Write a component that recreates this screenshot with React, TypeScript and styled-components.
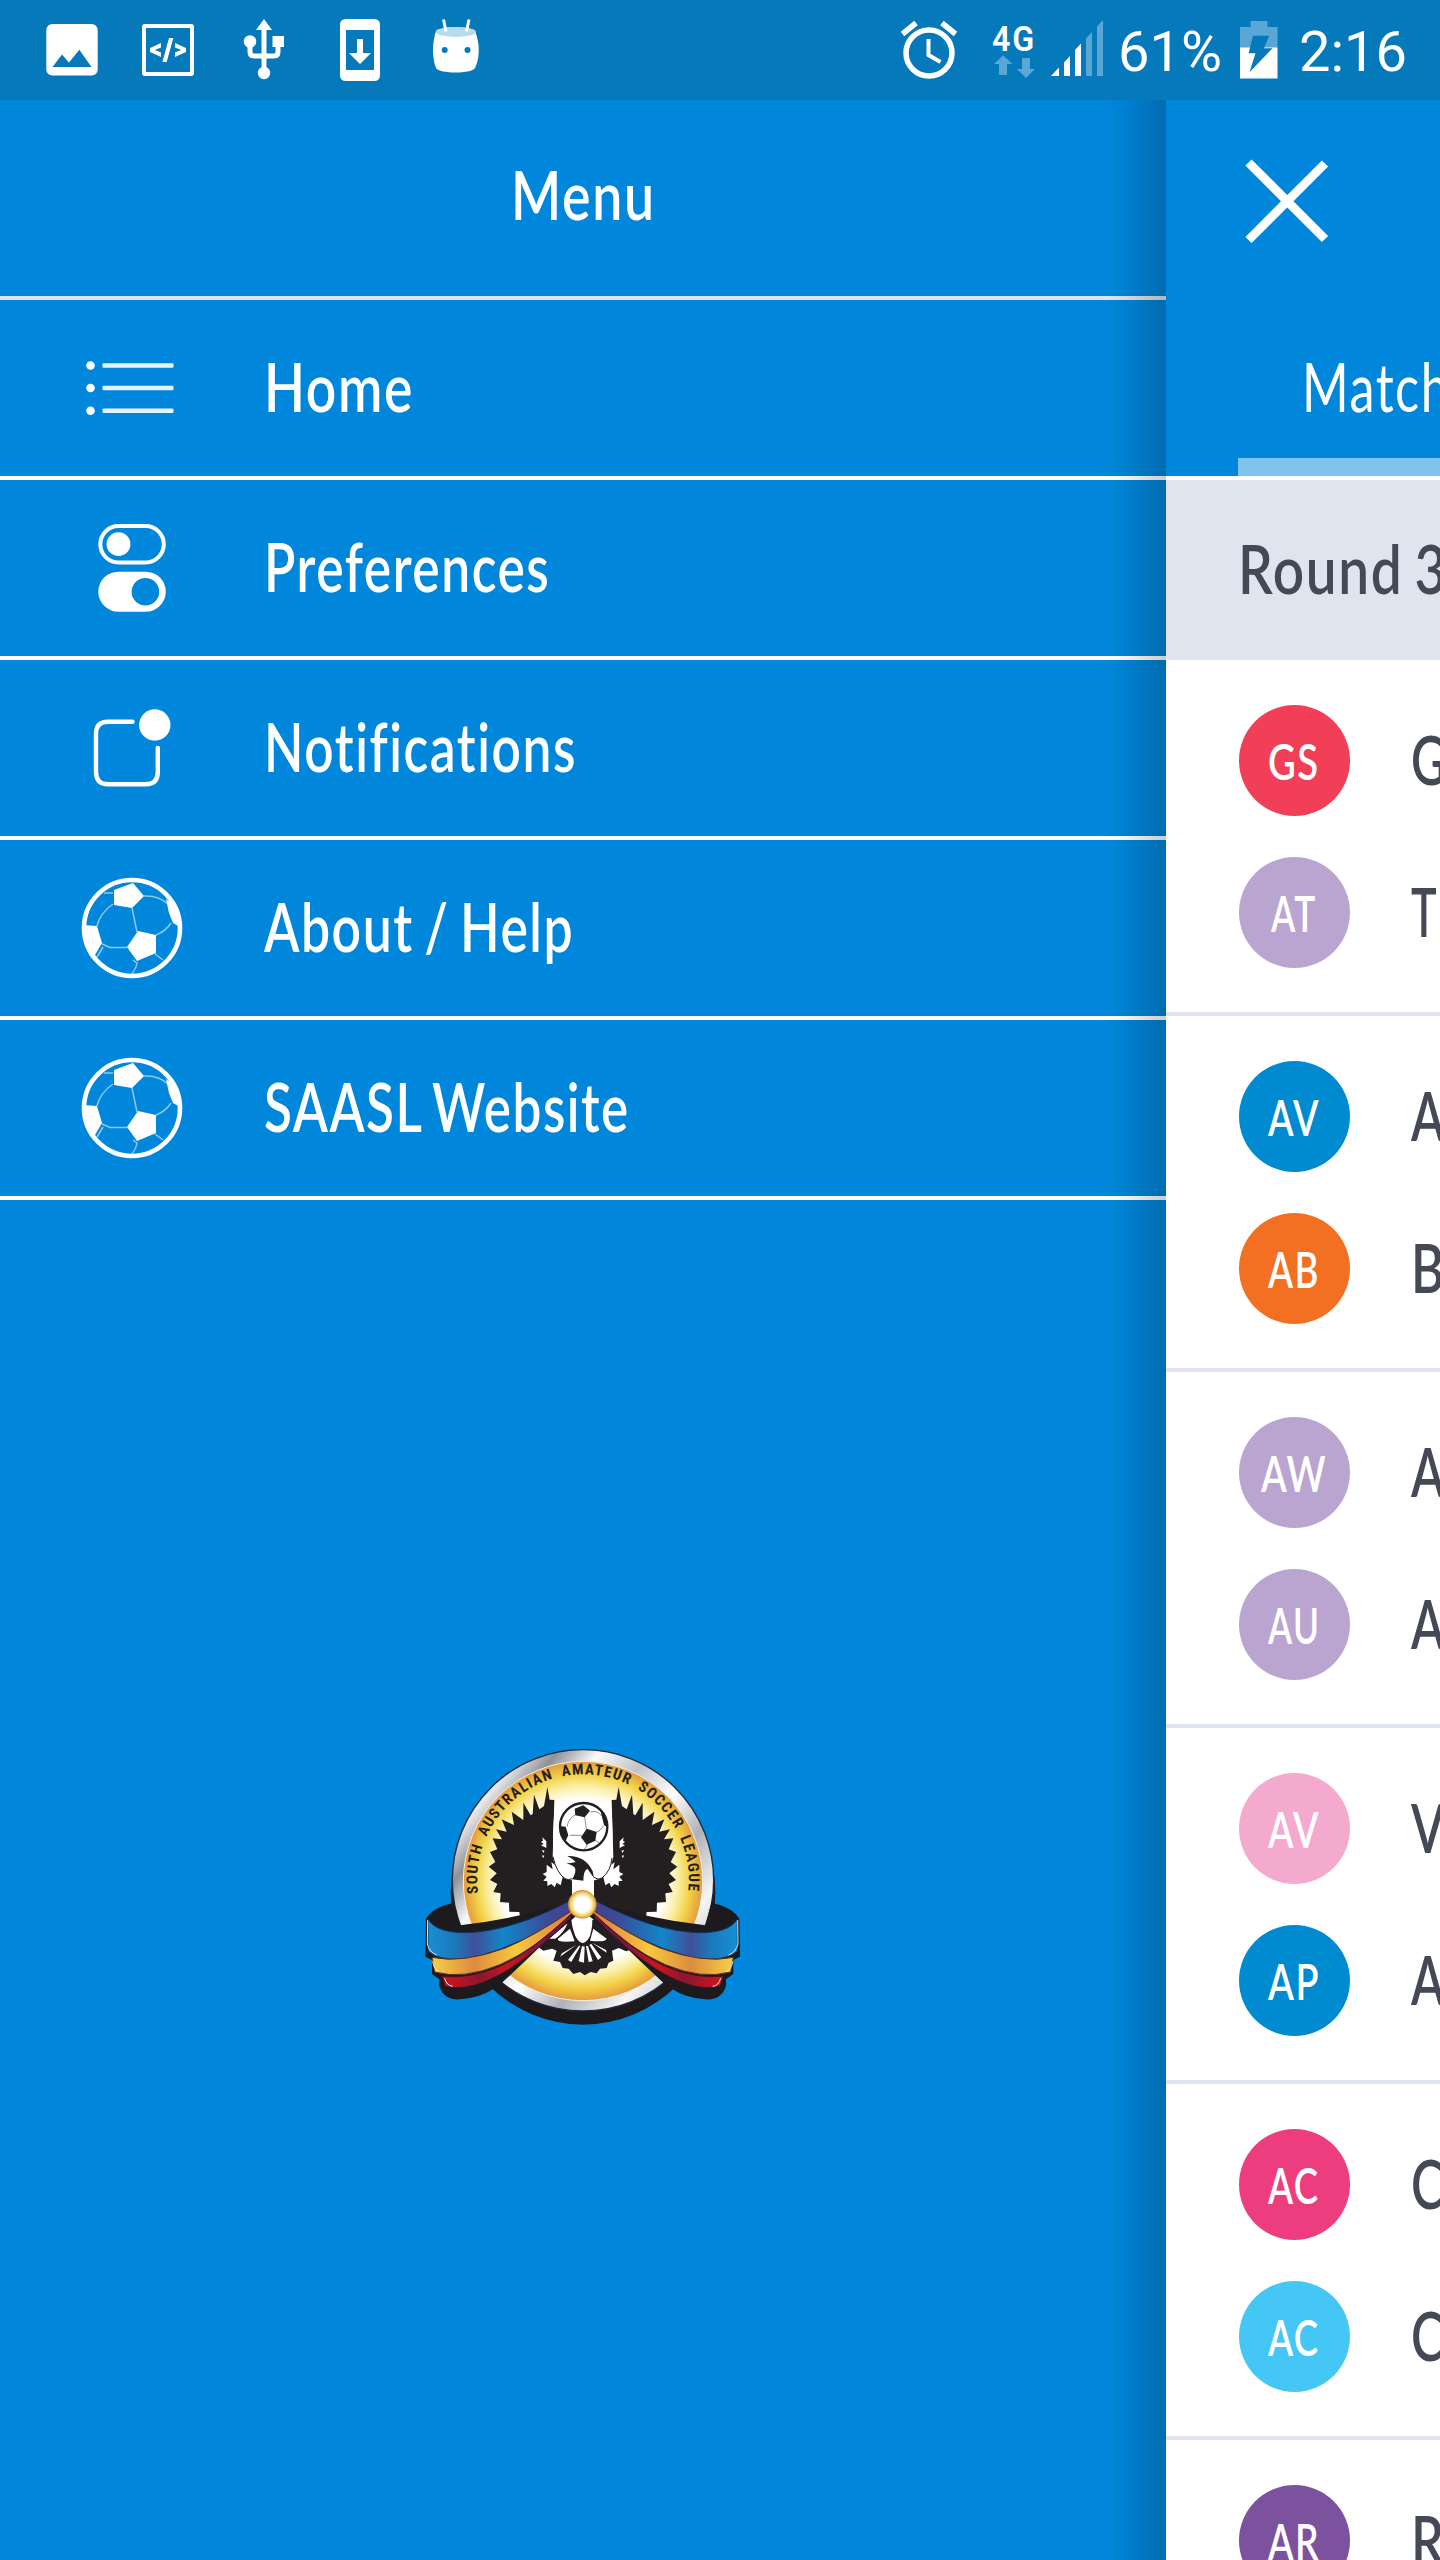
import React, { useLayoutEffect, useRef, useState } from "react";
import styled, { createGlobalStyle } from "styled-components";

const BLUE = "#0087db";
const DIM = "#5aa6d5";
const INK = "#454955";

const GlobalStyle = createGlobalStyle`
  body {
    margin: 0;
    overflow: hidden;
    font-family: Lato, "Open Sans", sans-serif;
  }
  svg {
    display: block;
    flex: none;
  }
`;

const Screen = styled.div`
  width: 1440px;
  height: 2560px;
  display: flex;
  flex-direction: column;
  overflow: hidden;
  background: ${BLUE};
`;

const StatusBar = styled.div`
  height: 100px;
  flex: none;
  display: flex;
  justify-content: space-between;
  padding: 0 31px 0 24px;
  background: #0679bb;
`;

const StatusGroup = styled.div`
  display: flex;
`;

const StatusText = styled.div<{ width: number }>`
  width: ${(p) => p.width}px;
  font: 400 56px/105px Roboto, sans-serif;
  color: #fff;
  white-space: nowrap;
`;

const Body = styled.div`
  flex: 1;
  display: flex;
  min-height: 0;
`;

const Drawer = styled.nav`
  position: relative;
  width: 1166px;
  flex: none;
  display: flex;
  flex-direction: column;
  color: #fff;
`;

const DrawerShade = styled.div`
  position: absolute;
  top: 0;
  right: 0;
  bottom: 0;
  width: 60px;
  background: linear-gradient(
    to right,
    rgba(0, 0, 0, 0),
    rgba(0, 0, 0, 0.06) 35%,
    rgba(0, 0, 0, 0.15) 75%,
    rgba(0, 0, 0, 0.2)
  );
`;

const DrawerTitle = styled.div`
  height: 196px;
  border-bottom: 4px solid #e0e4ee;
  display: flex;
  justify-content: center;
  line-height: 188px;
`;

const MenuRow = styled.div`
  height: 176px;
  border-bottom: 4px solid #fff;
  display: flex;
  line-height: 172px;
`;

const Logo = styled.div`
  margin: 530px 0 0 410px;
`;

const Main = styled.main`
  width: 274px;
  flex: none;
  overflow: hidden;
  background: #fff;
`;

const Header = styled.header`
  height: 376px;
  background: ${BLUE};
  border-bottom: 4px solid #fff;
  display: flex;
  flex-direction: column;
  justify-content: space-between;
`;

const Tab = styled.div`
  margin-left: 72px;
  padding-left: 64px;
  height: 152px;
  border-bottom: 18px solid #80c3ec;
  color: #fff;
  line-height: 160px;
`;

const RoundTitle = styled.div`
  height: 180px;
  padding-left: 72px;
  background: #e0e4ee;
  color: ${INK};
  line-height: 177px;
`;

const Match = styled.div`
  height: 356px;
  box-sizing: border-box;
  border-bottom: 4px solid #e0e4ee;
  padding: 44.5px 0 0 72.5px;
  display: flex;
  flex-direction: column;
  gap: 41px;
`;

const Team = styled.div`
  height: 111px;
  display: flex;
  gap: 61.5px;
  color: ${INK};
  line-height: 109px;
`;

const Avatar = styled.div<{ color: string }>`
  width: 111px;
  height: 111px;
  flex: none;
  border-radius: 50%;
  display: flex;
  justify-content: center;
  background: ${(p) => p.color};
  color: #fff;
  line-height: 112px;
`;

const Label = styled.span<{ size: number; weight: number }>`
  display: inline-block;
  white-space: pre;
  font-size: ${(p) => p.size}px;
  font-weight: ${(p) => p.weight};
  font-variant-ligatures: none;
  letter-spacing: 2px;
  word-spacing: -5px;
  transform-origin: 0 50%;
`;

const LabelBox = styled.span<{ width: number }>`
  display: block;
  flex: none;
  width: ${(p) => p.width}px;
`;

// squeezes a label horizontally so it reads as a condensed face
const Condensed = ({
  children,
  width,
  size = 67,
  weight = 600,
}: {
  children: string;
  width: number;
  size?: number;
  weight?: number;
}) => {
  const ref = useRef<HTMLSpanElement>(null);
  const [scale, setScale] = useState(0.75);
  useLayoutEffect(() => {
    if (ref.current) setScale(width / ref.current.offsetWidth);
  }, [width, children]);
  return (
    <LabelBox width={width}>
      <Label
        ref={ref}
        size={size}
        weight={weight}
        style={{ transform: `scaleX(${scale})` }}
      >
        {children}
      </Label>
    </LabelBox>
  );
};

const ImageIcon = () => (
  <svg width="96" height="100" viewBox="24 0 96 100">
    <rect x="46.3" y="24" width="51.4" height="51.6" rx="6" fill="#fff" />
    <path d="M52.5 67 62 54.5l7 8 10.300-12.700L91.500 67z" fill="#0679bb" />
  </svg>
);

const CodeIcon = () => (
  <svg width="96" height="100" viewBox="120 0 96 100">
    <rect x="144" y="26" width="48" height="48" rx="1" fill="none" stroke="#fff" strokeWidth="4" />
    <path d="M161 43v4.600l-6.200 2.400 6.200 2.400v4.600l-11-5v-4zM175 43v4.600l6.200 2.400-6.200 2.400v4.600l11-5v-4zM169 38h4.300l-6.600 24h-4.300z" fill="#fff" />
  </svg>
);

const UsbIcon = () => (
  <svg width="96" height="100" viewBox="216 0 96 100">
    <path d="M264 28v44M250 42v10q0 4 4 4h20q4 0 4-4V42" fill="none" stroke="#fff" strokeWidth="5" />
    <path d="M264 19l8 11h-16zM272.500 36h11.500v11h-11.500z" fill="#fff" />
    <circle cx="250" cy="41.500" r="6.300" fill="#fff" />
    <circle cx="264" cy="73" r="6.200" fill="#fff" />
  </svg>
);

const PhoneIcon = () => (
  <svg width="96" height="100" viewBox="312 0 96 100">
    <rect x="340" y="19" width="40" height="62" rx="5.500" fill="#fff" />
    <path d="M346 30h28v40h-28z" fill="#0679bb" />
    <path d="M357 39h6v14h8l-11 11-11-11h8z" fill="#fff" />
  </svg>
);

const AndroidIcon = () => (
  <svg width="96" height="100" viewBox="408 0 96 100">
    <path d="M436 31c-4 12-4 27 0 37 3 6 36 6 39 0 5-10 5-25 0-37-4-5-35-5-39 0z" fill="#fff" />
    <ellipse cx="456" cy="32" rx="20" ry="5" fill="#b9d9ec" />
    <path d="M443.500 19.500l2.500 12M469 19.500l-2.500 12" stroke="#fff" strokeWidth="3" />
    <circle cx="444.700" cy="50" r="3" fill="#0679bb" />
    <circle cx="467.500" cy="50" r="3" fill="#0679bb" />
  </svg>
);

const AlarmIcon = () => (
  <svg width="90" height="100" viewBox="896 0 90 100">
    <circle cx="929" cy="53" r="23" fill="none" stroke="#fff" strokeWidth="5.500" />
    <path d="M902.500 34l13.500-11M955.500 34L942 23" stroke="#fff" strokeWidth="5.500" />
    <path d="M928.500 39v16l12 7" fill="none" stroke="#fff" strokeWidth="4" />
  </svg>
);

const NetworkIcon = () => (
  <svg width="58" height="100" viewBox="986 0 58 100">
    <text
      x="992"
      y="51"
      fontFamily="Roboto, sans-serif"
      fontWeight="600"
      fontSize="35"
      letterSpacing="2"
      textLength="44"
      lengthAdjust="spacingAndGlyphs"
      fill="#fff"
    >
      4G
    </text>
    <path d="M1003 55.300l9.500 8.700h-5.500v11h-8V64h-5zM1026 78l-9-9h5V58h8v11h5z" fill={DIM} />
  </svg>
);

const SignalIcon = () => (
  <svg width="74" height="100" viewBox="1044 0 74 100">
    <path d="M1051 76l8-8.500V76zM1064 62.500l6-6.500v20h-6zM1075 50l6-6.500V76h-6z" fill="#fff" />
    <path d="M1086 38.500l6-6.500v44h-6zM1097 26.500l6-6.500v56h-6z" fill={DIM} />
  </svg>
);

const BatteryIcon = () => (
  <svg width="68" height="100" viewBox="1231 0 68 100">
    <path d="M1240 27h10.500v-6h17v6h10v21H1240z" fill={DIM} />
    <path d="M1240 47.500h37.500v31H1240z" fill="#fff" />
    <path d="M1253 35.700h16.200l-5.200 12.600h8.500l-23 24 6-19h-6.900z" fill="#0679bb" />
  </svg>
);

const HomeIcon = () => (
  <svg width="264" height="176" viewBox="0 300 264 176" fill="#fff">
    {[365.5, 388, 410.8].map((y) => (
      <g key={y}>
        <circle cx="90.500" cy={y} r="4.300" />
        <rect x="102.500" y={y - 2.2} width="71" height="4.400" rx="1" opacity="0.9" />
      </g>
    ))}
  </svg>
);

const PreferencesIcon = () => (
  <svg width="264" height="176" viewBox="0 480 264 176">
    <rect x="100.300" y="526" width="63.500" height="36.500" rx="18.200" fill="none" stroke="#fff" strokeWidth="4" />
    <circle cx="118.500" cy="544.200" r="11.900" fill="#fff" />
    <rect x="98.300" y="571.700" width="67.500" height="40" rx="20" fill="#fff" />
    <circle cx="145.400" cy="591.700" r="13.800" fill={BLUE} />
  </svg>
);

const NotificationsIcon = () => (
  <svg width="264" height="176" viewBox="0 660 264 176">
    <path
      d="M132.500 721.700H108q-12 0-12 12V772q0 12.300 12 12.300h37.500q12.300 0 12.300-12.300v-24"
      fill="none"
      stroke="#fff"
      strokeWidth="4.400"
      strokeLinecap="round"
    />
    <circle cx="154.800" cy="725" r="15.700" fill="#fff" />
  </svg>
);

const BallIcon = () => (
  <svg width="264" height="176" viewBox="-72 -28 264 176">
    <path
      d="M41 36Q28 45 25 58M60 40l5 24M72 28q14-1 24 8M41 25l-9 0M30 76l8 3.500h17M84 67q10-4 15-12M31 79l-6 10M61 92l4 3q-1 6-6 12M83 86l8 6"
      fill="none"
      stroke="#8cc8f0"
      strokeWidth="1.500"
    />
    <path
      d="M42 22l19-7 11 13-12 12-18-3zM66 63l18 4v18l-19 8-10-14zM11 57l14 1 5 17-7 12-5 1Q10 70 11 57zM94 31l4 3q9 12 10 25l-7-4-4-10z"
      fill="#fff"
    />
    <circle cx="60" cy="60" r="48" fill="none" stroke="#fff" strokeWidth="4.600" />
  </svg>
);

const CloseIcon = () => (
  <svg width="274" height="150" viewBox="1166 100 274 150">
    <path d="M1248.500 162.500l76.500 76.500M1325 163.500l-76.500 76.500" stroke="#fff" strokeWidth="8.800" />
  </svg>
);

const Wing = () => (
  <g>
    <path
      fill="#231f20"
      d="M412 171L419 209 433 210 430 320 428 380Q437 428 464 444L488 452V540L330 560 328 546 298 545 297 518 270 516 272 490 250 486 262 462 240 450 260 430 236 410 256 396 240 366 262 358 248 325 276 328 258 298 290 305 275 268 312 285 305 245 340 270 340 218 362 256 368 252 372 194 388 238 402 228z"
    />
    <path
      fill="#fff"
      d="M410 404l18 14-4-22 14 12 20 34-6 24-12-8-6 14-10-10-12 6 0-14-12-2 10-12-12-8 12-6zM397 322l12 12v20l-16-8 8-4-8-6 6-4zM396 360l8 2-4 7zM396 376l7 1-4 8z"
    />
  </g>
);

const Ribbon = () => (
  <g>
    <path
      fill="#1d1a1e"
      d="M132 518Q70 530 48 566L46 680l20 10 0 42 22 16 0 20q14 44 62 40 60-4 98-30l28-20Q350 690 395 645L520 540l-30-28Q330 565 150 586z"
    />
    <path
      fill="url(#blueBand)"
      stroke="#12335f"
      strokeWidth="3"
      d="M54 568q26 42 120 40Q310 602 480 512l10 30Q350 640 200 680 100 702 54 664z"
    />
    <path
      fill="url(#goldBand)"
      stroke="#59301e"
      strokeWidth="3"
      d="M66 682q90 20 220-28Q370 620 488 540l-2 12Q380 656 270 704 160 750 74 726z"
    />
    <path
      fill="url(#redBand)"
      stroke="#42131d"
      strokeWidth="3"
      d="M96 738q80 10 170-28Q350 676 486 550l-4 14Q390 658 300 716 180 790 106 768z"
    />
    <path d="M53 570l-1 72q6 24 28 33M68 694q4 26 20 31M104 745q6 22 24 24" fill="none" stroke="#cfeaf8" strokeWidth="3" />
  </g>
);

const LeagueLogo = () => (
  <svg width="350" height="310" viewBox="0 0 1050 930">
    <defs>
      <linearGradient id="silver" x1="0" y1="0.1" x2="1" y2="0.9">
        <stop offset="0" stopColor="#f4f4f6" />
        <stop offset="0.120" stopColor="#e8e8ea" />
        <stop offset="0.200" stopColor="#8f9096" />
        <stop offset="0.300" stopColor="#fafafa" />
        <stop offset="0.420" stopColor="#c2c3c8" />
        <stop offset="0.550" stopColor="#ffffff" />
        <stop offset="0.680" stopColor="#b0b1b6" />
        <stop offset="0.820" stopColor="#f5f5f5" />
        <stop offset="1" stopColor="#a9aab0" />
      </linearGradient>
      <radialGradient id="gold">
        <stop offset="0.680" stopColor="#fff" />
        <stop offset="0.790" stopColor="#fbefa8" />
        <stop offset="0.890" stopColor="#f2d348" />
        <stop offset="1" stopColor="#e59a3c" />
      </radialGradient>
      <linearGradient id="blueBand">
        <stop offset="0" stopColor="#1790d4" />
        <stop offset="0.180" stopColor="#1a79bb" />
        <stop offset="0.320" stopColor="#40509a" />
        <stop offset="0.520" stopColor="#1286ca" />
        <stop offset="0.820" stopColor="#3b4b97" />
        <stop offset="1" stopColor="#45408d" />
      </linearGradient>
      <linearGradient id="goldBand">
        <stop offset="0" stopColor="#f8cf45" />
        <stop offset="0.300" stopColor="#dc8b3d" />
        <stop offset="0.600" stopColor="#f9c840" />
        <stop offset="1" stopColor="#d8793a" />
      </linearGradient>
      <linearGradient id="redBand">
        <stop offset="0" stopColor="#d3141c" />
        <stop offset="0.300" stopColor="#8b1630" />
        <stop offset="0.500" stopColor="#c9161f" />
        <stop offset="0.800" stopColor="#6c1741" />
        <stop offset="1" stopColor="#6c1741" />
      </linearGradient>
      <radialGradient id="knot">
        <stop offset="0.550" stopColor="#fff" />
        <stop offset="0.750" stopColor="#f9e28a" />
        <stop offset="1" stopColor="#dfa030" />
      </radialGradient>
      <path id="ringText" d="M204 490A317.500 317.500 0 1 1 834 490" />
    </defs>
    <circle cx="519" cy="487" r="397" fill="#1d1a1e" />
    <circle cx="519" cy="451" r="392" fill="url(#silver)" stroke="#1c2c40" strokeWidth="4" />
    <circle cx="519" cy="453" r="359" fill="url(#gold)" stroke="#f7efe0" strokeWidth="3" />
    <text
      fontFamily="'Liberation Sans Narrow', 'Roboto Condensed', Roboto, sans-serif"
      fontWeight="700"
      fontSize="45"
      wordSpacing="12"
      fill="#231f20"
    >
      <textPath href="#ringText" textLength="1068" lengthAdjust="spacing">
        SOUTH AUSTRALIAN AMATEUR SOCCER LEAGUE
      </textPath>
    </text>

    <Wing />
    <g transform="translate(1038 0) scale(-1 1)">
      <Wing />
    </g>
    <path fill="#fff" d="M433 240q-6 70-4 140 10 48 36 66 12 6 21 0v60h66v-64q12 10 24 2 26-20 30-60 4-70-1-144z" />
    <path fill="none" stroke="#231f20" strokeWidth="3" d="M429 380q10 48 36 66 12 6 21 0M552 442q12 10 24 2 26-20 30-60" />
    <path
      fill="#231f20"
      d="M472 378q54-2 76 46l4 20-20-28q-12 6-12 36l-34-4q14-20 9-34-2-6-26-14 16 0 28-4-12-12-25-18z"
    />

    <circle cx="521" cy="290" r="71" fill="#fff" stroke="#231f20" strokeWidth="7" />
    <path
      d="M497 254q-20 8-26 36M524 260l5 38M541 246q22-6 34 12M480 316h35M556 308q16-4 24-20M532 342q-2 10-10 16M553 330l14 8"
      fill="none"
      stroke="#555"
      strokeWidth="2"
    />
    <path
      fill="#231f20"
      d="M494 236l26-10 20 16-16 20-28-6zM530 296l30 10-4 26-26 12-17-22zM449 288l18 2 8 26-8 16q-18-20-18-44zM572 244q20 20 22 48l-12-6z"
    />

    {/* tail fan */}
    <path
      fill="#231f20"
      d="M470 570l-84 82 14 10 26-6 14 6-10 30 20 4 8 18 18 2 14 16 20-6 14 10 18-10 18 4 10-14 20-2 6-16 14-6-4-30 20-8 22 10 18-6-82-88z"
    />
    <path
      fill="#fff"
      d="M484 552q-2 30 12 66 22 42 44 0 10-34 6-66zM464 578l-50 48 22 0q24-16 36-44zM480 596l-36 30q-6 12 50 8zM550 596l40 30q-4 12-50 6zM500 644l-44 26-6 10zM508 646l-34 44 10 6 26-46zM516 648l-10 46 16 4 2-48zM528 648l8 48 12-2-14-46zM538 644l26 46 10-8-30-40zM546 638l44 30-2-8z"
    />

    <Ribbon />
    <g transform="translate(1036 0) scale(-1 1)">
      <Ribbon />
    </g>
    <circle cx="517" cy="523" r="42" fill="url(#knot)" stroke="#c98a2a" strokeWidth="2" />
  </svg>
);

const menu = [
  { label: "Home", width: 150, icon: <HomeIcon /> },
  { label: "Preferences", width: 286, icon: <PreferencesIcon /> },
  { label: "Notifications", width: 313, icon: <NotificationsIcon /> },
  { label: "About / Help", width: 310, icon: <BallIcon /> },
  { label: "SAASL Website", width: 366, icon: <BallIcon /> },
];

type Side = { code: string; color: string; name: string; width: number };

const matches: Side[][] = [
  [
    { code: "GS", color: "#f03f56", name: "G", width: 37 },
    { code: "AT", color: "#b9a5cf", name: "T", width: 27 },
  ],
  [
    { code: "AV", color: "#008ad0", name: "A", width: 35 },
    { code: "AB", color: "#f36f21", name: "B", width: 35 },
  ],
  [
    { code: "AW", color: "#b9a5cf", name: "A", width: 35 },
    { code: "AU", color: "#b9a5cf", name: "A", width: 35 },
  ],
  [
    { code: "AV", color: "#f4aace", name: "V", width: 35 },
    { code: "AP", color: "#008ad0", name: "A", width: 35 },
  ],
  [
    { code: "AC", color: "#ee3d7f", name: "C", width: 35 },
    { code: "AC", color: "#45c7f6", name: "C", width: 35 },
  ],
  [{ code: "AR", color: "#7c529f", name: "R", width: 35 }],
];

const codeWidth = (code: string) =>
  code === "AW" ? 66 : code === "AT" ? 46 : 52;

const App = () => (
  <>
    <GlobalStyle />
    <Screen>
      <StatusBar>
        <StatusGroup>
          <ImageIcon />
          <CodeIcon />
          <UsbIcon />
          <PhoneIcon />
          <AndroidIcon />
        </StatusGroup>
        <StatusGroup>
          <AlarmIcon />
          <NetworkIcon />
          <SignalIcon />
          <StatusText width={113}>61%</StatusText>
          <BatteryIcon />
          <StatusText width={110}>2:16</StatusText>
        </StatusGroup>
      </StatusBar>
      <Body>
        <Drawer>
          <DrawerTitle>
            <Condensed width={145}>Menu</Condensed>
          </DrawerTitle>
          {menu.map((item) => (
            <MenuRow key={item.label}>
              {item.icon}
              <Condensed width={item.width}>{item.label}</Condensed>
            </MenuRow>
          ))}
          <Logo>
            <LeagueLogo />
          </Logo>
          <DrawerShade />
        </Drawer>
        <Main>
          <Header>
            <CloseIcon />
            <Tab>
              <Condensed width={148} weight={400}>
                Match
              </Condensed>
            </Tab>
          </Header>
          <RoundTitle>
            <Condensed width={210}>Round 3</Condensed>
          </RoundTitle>
          {matches.map((sides, i) => (
            <Match key={i}>
              {sides.map((side, j) => (
                <Team key={j}>
                  <Avatar color={side.color}>
                    <Condensed width={codeWidth(side.code)} size={50} weight={600}>
                      {side.code}
                    </Condensed>
                  </Avatar>
                  <Condensed width={side.width}>{side.name}</Condensed>
                </Team>
              ))}
            </Match>
          ))}
        </Main>
      </Body>
    </Screen>
  </>
);

export default App;
